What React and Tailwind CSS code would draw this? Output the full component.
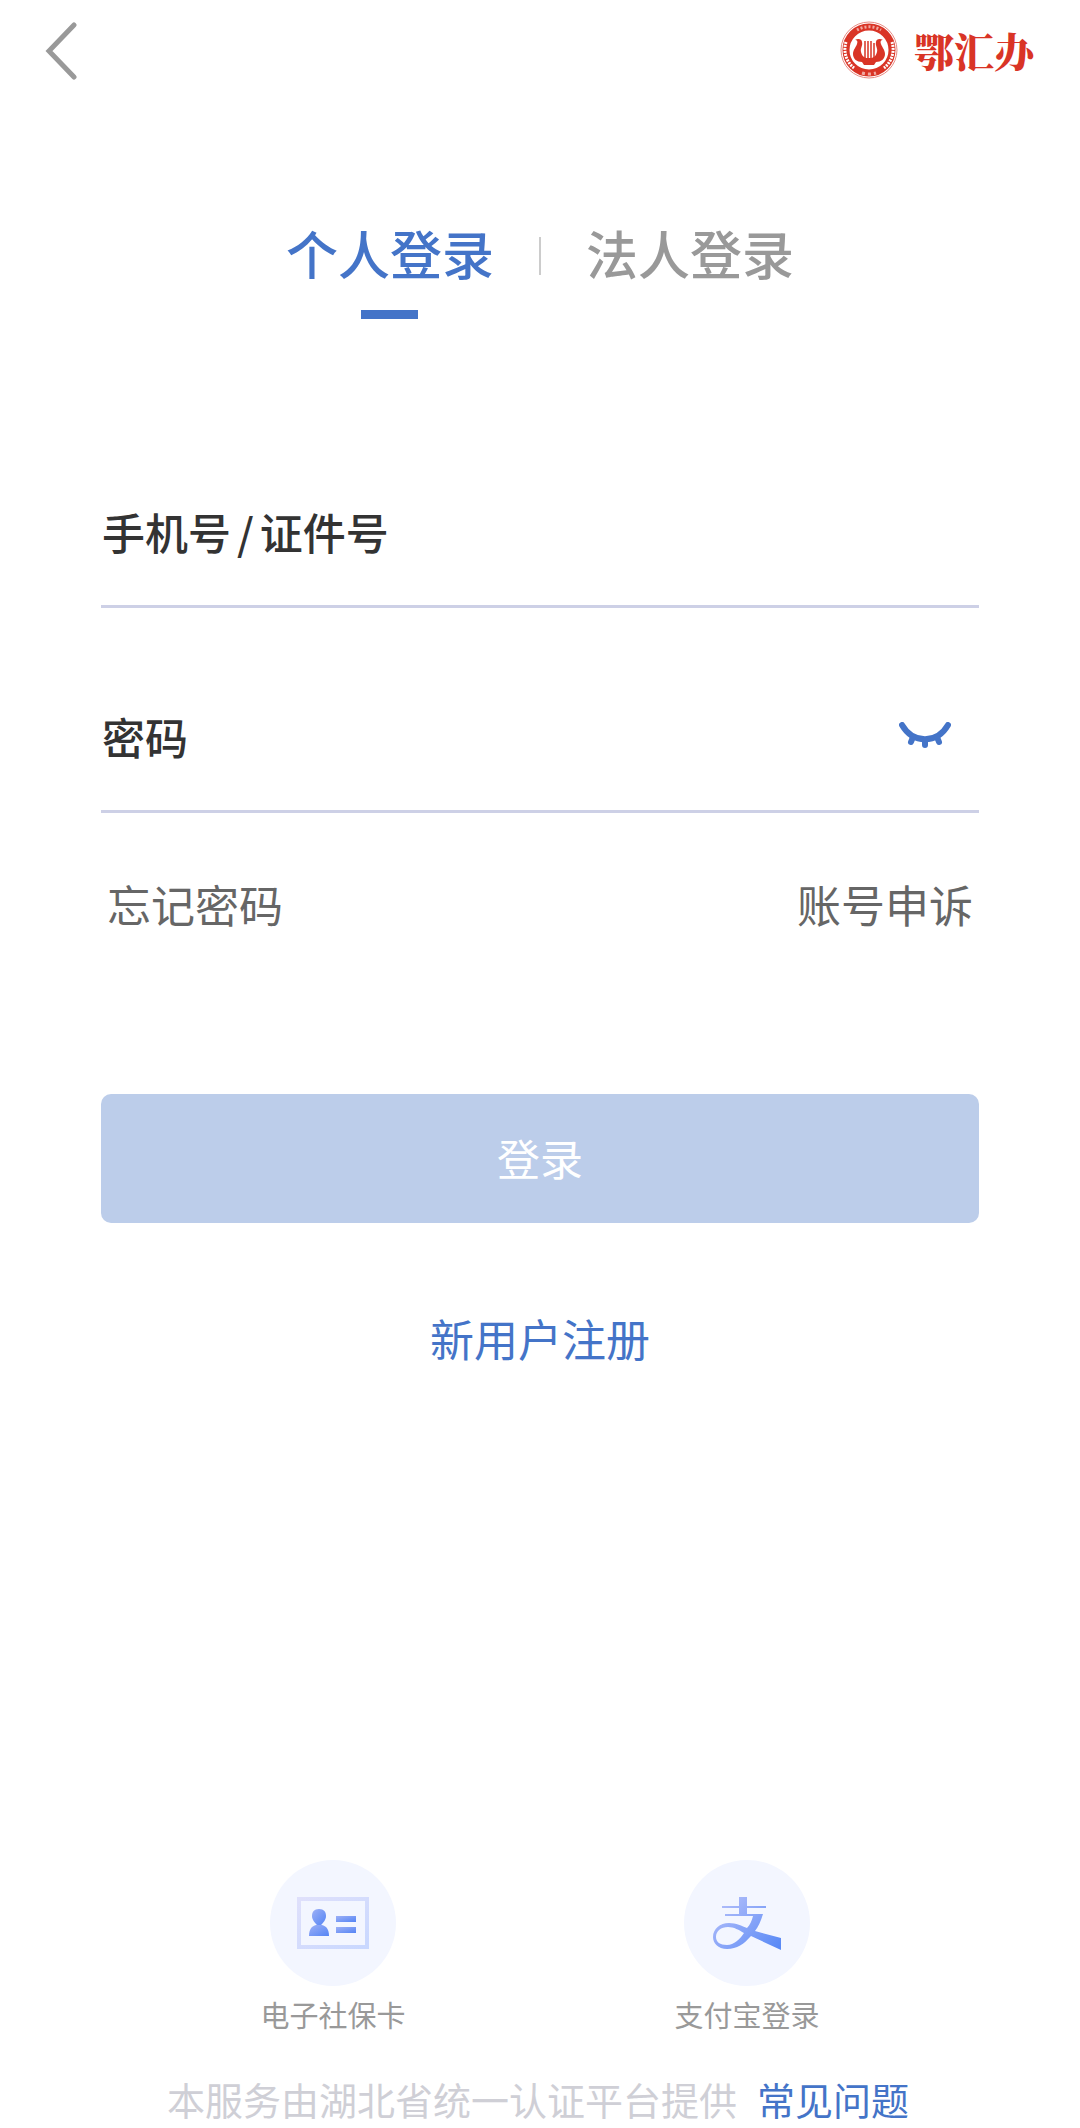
import { useState } from "react";

const TABS = [
    { key: "personal", label: "个人登录" },
    { key: "corporate", label: "法人登录" },
];

function BackIcon() {
    return (
        <svg className="w-[36px] h-[60px]" viewBox="0 0 36 60" fill="none" stroke="#999999" strokeWidth="5" strokeLinecap="round">
            <path d="M31 5 L6 31 L31 57" />
        </svg>
    );
}

function Emblem() {
    return (
        <svg className="w-[58px] h-[58px]" viewBox="0 0 58 58" fill="none">
            <circle cx="29" cy="29" r="28" stroke="#e88a83" strokeWidth="1" />
            <circle cx="29" cy="29" r="23" stroke="#d93426" strokeWidth="7" />
            <path d="M6 21 A24 24 0 0 0 14 47" stroke="#ffffff" strokeWidth="3" strokeDasharray="2 1" />
            <path d="M52 21 A24 24 0 0 1 44 47" stroke="#ffffff" strokeWidth="3" strokeDasharray="2 1" />
            <path d="M17 9 A24 24 0 0 1 41 9" stroke="#f0a8a1" strokeWidth="3" strokeDasharray="2 2" />
            <path d="M22 52 A24 24 0 0 0 36 52" stroke="#f0a8a1" strokeWidth="3" strokeDasharray="3 3" />
            <path
                d="M15 19 C18 17 22 18 22 21 C23 25 20 27 21 31 C22 35 24 36 26 37 H32 C34 36 36 35 37 31 C38 27 35 25 36 21 C36 18 40 17 43 19 C41 19 40 20 41 23 C42 26 45 29 45 33 C45 38 41 41 36 41 L34 44 H24 L22 41 C17 41 13 38 13 33 C13 29 16 26 17 23 C18 20 17 19 15 19 Z"
                fill="#d93426"
            />
            <path d="M25 20 V38 M28 20 V38 M31 20 V38 M34 22 V37" stroke="#d93426" strokeWidth="1.5" />
        </svg>
    );
}

function ClosedEyeIcon() {
    return (
        <svg className="w-[52px] h-[28px]" viewBox="0 0 52 28" fill="none" stroke="#4474c8" strokeWidth="6" strokeLinecap="round">
            <path d="M3 3 C14 22 38 22 49 3" />
            <path d="M14 15 L12 20 M26 18 V23 M38 15 L40 20" />
        </svg>
    );
}

function SocialCardIcon() {
    return (
        <svg className="w-[72px] h-[52px]" viewBox="0 0 72 52" fill="none">
            <defs>
                <linearGradient id="cardBorder" x1="0" y1="0" x2="1" y2="1">
                    <stop offset="0" stopColor="#dfe0fb" />
                    <stop offset="1" stopColor="#c9d8ff" />
                </linearGradient>
                <linearGradient id="cardInk" x1="0" y1="0" x2="1" y2="1">
                    <stop offset="0" stopColor="#9db0f6" />
                    <stop offset="1" stopColor="#5585f5" />
                </linearGradient>
            </defs>
            <rect x="2" y="2" width="68" height="48" stroke="url(#cardBorder)" strokeWidth="4" />
            <path d="M22 12 C27 12 29 15 29 19 C29 23 26 26 24 28 H20 C18 26 15 23 15 19 C15 15 17 12 22 12 Z" fill="url(#cardInk)" />
            <path d="M12 39 C12 32 15 29 19 28 H25 C29 29 32 32 32 39 Z" fill="url(#cardInk)" />
            <rect x="39" y="19" width="20" height="6" fill="url(#cardInk)" />
            <rect x="39" y="30" width="20" height="6" fill="url(#cardInk)" />
        </svg>
    );
}

function AlipayIcon() {
    return (
        <svg className="w-[68px] h-[54px]" viewBox="0 0 68 54" fill="none">
            <defs>
                <linearGradient id="alipayInk" gradientUnits="userSpaceOnUse" x1="10" y1="0" x2="62" y2="54">
                    <stop offset="0" stopColor="#b4bffa" />
                    <stop offset="1" stopColor="#5a8af6" />
                </linearGradient>
            </defs>
            <path
                d="M26 1 H34 V10 H53 V12 H34 V18 H50 C48 25 45 31 42 35 L68 42 V54 L38 40 C31 48 24 53 14 53 C5 53 0 47 0 41 C0 33 7 27 16 27 C23 27 29 30 34 32 C37 29 39 24 40 20 H12 V18 H26 V12 H9 V10 H26 Z M31 37 C26 34 21 31 15 31 C8 31 3 35 3 41 C3 46 7 49 14 49 C21 49 27 43 31 37 Z"
                fill="url(#alipayInk)"
                fillRule="evenodd"
            />
        </svg>
    );
}

export default function App() {
    const [tab, setTab] = useState("personal");
    const [account, setAccount] = useState("");
    const [password, setPassword] = useState("");
    const [showPassword, setShowPassword] = useState(false);

    return (
        <div className="min-h-screen flex flex-col bg-white font-['Noto_Sans_CJK_SC',sans-serif] text-[#333333]">

            {/* HEADER */}
            <header className="flex items-center justify-between h-[100px] pl-[43px] pr-[46px]">
                <button type="button" aria-label="返回">
                    <BackIcon />
                </button>
                <div className="flex items-center gap-4">
                    <Emblem />
                    <span className="text-[40px] leading-[56px] font-black text-[#d93426] font-['Noto_Serif_CJK_SC','Noto_Sans_CJK_SC',serif]">
                        鄂汇办
                    </span>
                </div>
            </header>

            {/* TABS */}
            <nav className="flex justify-center items-start gap-[45px] mt-[117px]">
                {TABS.map((t, i) => (
                    <div key={t.key} className="flex items-start gap-[45px]">
                        {i > 0 && <span className="w-[2px] h-[38px] mt-5 bg-[#cccccc]" />}
                        <button
                            type="button"
                            onClick={() => setTab(t.key)}
                            className={`flex flex-col items-center gap-[21px] text-[52px] leading-[72px] font-medium ${tab === t.key ? "text-[#4474c8]" : "text-[#999999]"}`}
                        >
                            {t.label}
                            <span className={`w-[57px] h-[9px] ${tab === t.key ? "bg-[#4474c8]" : "bg-transparent"}`} />
                        </button>
                    </div>
                ))}
            </nav>

            {/* FORM */}
            <form onSubmit={(e) => e.preventDefault()} className="flex flex-col mt-[180px] px-[101px] text-[43px] leading-[64px]">
                <div className="flex items-center pb-[42px] border-b-3 border-[#cdd0e6]">
                    <label htmlFor="account" className="pl-px font-medium">
                        手机号<span className="px-1.5">/</span>证件号
                    </label>
                    <input
                        id="account"
                        type="text"
                        value={account}
                        onChange={(e) => setAccount(e.target.value)}
                        className="flex-1 min-w-0 h-16 ml-6 outline-none"
                    />
                </div>

                <div className="flex items-center mt-24 pb-[42px] border-b-3 border-[#cdd0e6]">
                    <label htmlFor="password" className="pl-px font-medium">密码</label>
                    <input
                        id="password"
                        type={showPassword ? "text" : "password"}
                        value={password}
                        onChange={(e) => setPassword(e.target.value)}
                        className="flex-1 min-w-0 h-16 ml-6 outline-none"
                    />
                    <button type="button" aria-label="显示密码" onClick={() => setShowPassword(!showPassword)} className="mr-7">
                        <ClosedEyeIcon />
                    </button>
                </div>

                <div className="flex justify-between mt-[59px] px-[6px] text-[44px] text-[#666666]">
                    <a href="#forgot">忘记密码</a>
                    <a href="#appeal">账号申诉</a>
                </div>

                <button type="submit" className="mt-[158px] h-[129px] pb-1 rounded-[10px] bg-[#bccdea] text-white">
                    登录
                </button>

                <a href="#register" className="self-center mt-[83px] text-[44px] text-[#4474c8]">新用户注册</a>
            </form>

            {/* OTHER LOGIN METHODS */}
            <div className="mt-auto pt-10 px-[126px] grid grid-cols-2 text-[29px] leading-[40px] text-[#999999]">
                <button type="button" className="flex flex-col items-center gap-2">
                    <span className="flex items-center justify-center size-[126px] rounded-full bg-[#f3f6ff]">
                        <SocialCardIcon />
                    </span>
                    电子社保卡
                </button>
                <button type="button" className="flex flex-col items-center gap-2">
                    <span className="flex items-center justify-center size-[126px] rounded-full bg-[#f3f6ff]">
                        <AlipayIcon />
                    </span>
                    支付宝登录
                </button>
            </div>

            <footer className="flex justify-center gap-5 mt-10 pr-1 pb-1 text-[38px] leading-[50px] text-[#cfcfd6]">
                <span>本服务由湖北省统一认证平台提供</span>
                <a href="#faq" className="text-[#4474c8]">常见问题</a>
            </footer>
        </div>
    );
}
